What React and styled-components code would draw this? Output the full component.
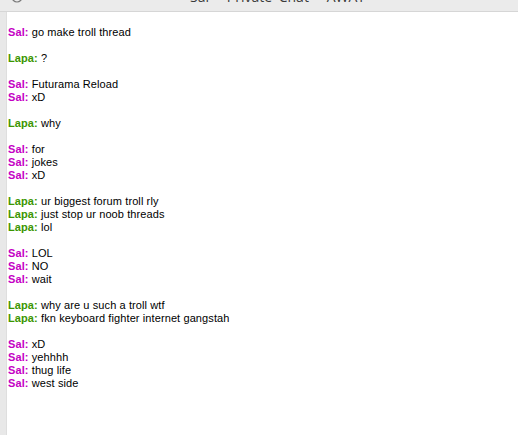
import styled, { createGlobalStyle } from "styled-components"

const GlobalStyle = createGlobalStyle`
  html, body {
    margin: 0;
    padding: 0;
    background: #ffffff;
  }
`

const messages = [
  [["Sal", "go make troll thread"]],
  [["Lapa", "?"]],
  [["Sal", "Futurama Reload"], ["Sal", "xD"]],
  [["Lapa", "why"]],
  [["Sal", "for"], ["Sal", "jokes"], ["Sal", "xD"]],
  [["Lapa", "ur biggest forum troll rly"], ["Lapa", "just stop ur noob threads"], ["Lapa", "lol"]],
  [["Sal", "LOL"], ["Sal", "NO"], ["Sal", "wait"]],
  [["Lapa", "why are u such a troll wtf"], ["Lapa", "fkn keyboard fighter internet gangstah"]],
  [["Sal", "xD"], ["Sal", "yehhhh"], ["Sal", "thug life"], ["Sal", "west side"]],
]

export default function App() {
  return (
    <Window>
      <GlobalStyle />
      <TitleBar>
        <Icon width="14" height="14" viewBox="0 0 14 14">
          <circle cx="7" cy="5" r="5" fill="none" stroke="#7a7a7a" strokeWidth="1.2" />
        </Icon>
        <Title>Sal - Private Chat - AWAY</Title>
      </TitleBar>
      <Body>
        <Gutter />
        <ChatLog>
          {messages.map((group, i) => (
            <Group key={i}>
              {group.map(([who, text], j) => (
                <Line key={j}>
                  <Name $who={who}>{who}:</Name> {text}
                </Line>
              ))}
            </Group>
          ))}
        </ChatLog>
      </Body>
    </Window>
  )
}

const Window = styled.div`
  width: 518px;
  height: 435px;
  display: flex;
  flex-direction: column;
  overflow: hidden;
  background: #ffffff;
`
const TitleBar = styled.div`
  height: 11px;
  flex-shrink: 0;
  display: flex;
  align-items: flex-start;
  background: #ebebeb;
  border-bottom: 1px solid #d6d6d6;
  overflow: hidden;
  position: relative;
`
const Icon = styled.svg`
  position: absolute;
  left: 10px;
  top: -8px;
`
const Title = styled.div`
  margin-left: 190px;
  margin-top: -13px;
  font-family: "Open Sans", "Noto Sans", sans-serif;
  font-size: 14px;
  line-height: 20px;
  color: #3a3a3a;
  word-spacing: 3px;
  white-space: nowrap;
`
const Body = styled.div`
  flex: 1;
  display: flex;
`
const Gutter = styled.div`
  width: 6px;
  background: #e8e8e8;
  border-right: 1px solid #dedede;
  flex-shrink: 0;
`
const ChatLog = styled.div`
  flex: 1;
  padding: 14px 0 0 1px;
  display: flex;
  flex-direction: column;
  gap: 13px;
  font-family: "Liberation Sans", Arial, sans-serif;
  font-size: 11px;
  letter-spacing: 0.1px;
  color: #000000;
  -webkit-font-smoothing: none;
`
const Group = styled.div`
  display: flex;
  flex-direction: column;
`
const Line = styled.div`
  height: 13px;
  line-height: 13px;
  white-space: nowrap;
`
const Name = styled.span`
  font-weight: bold;
  color: ${(p) => (p.$who === "Sal" ? "#c400c4" : "#3c9600")};
`
